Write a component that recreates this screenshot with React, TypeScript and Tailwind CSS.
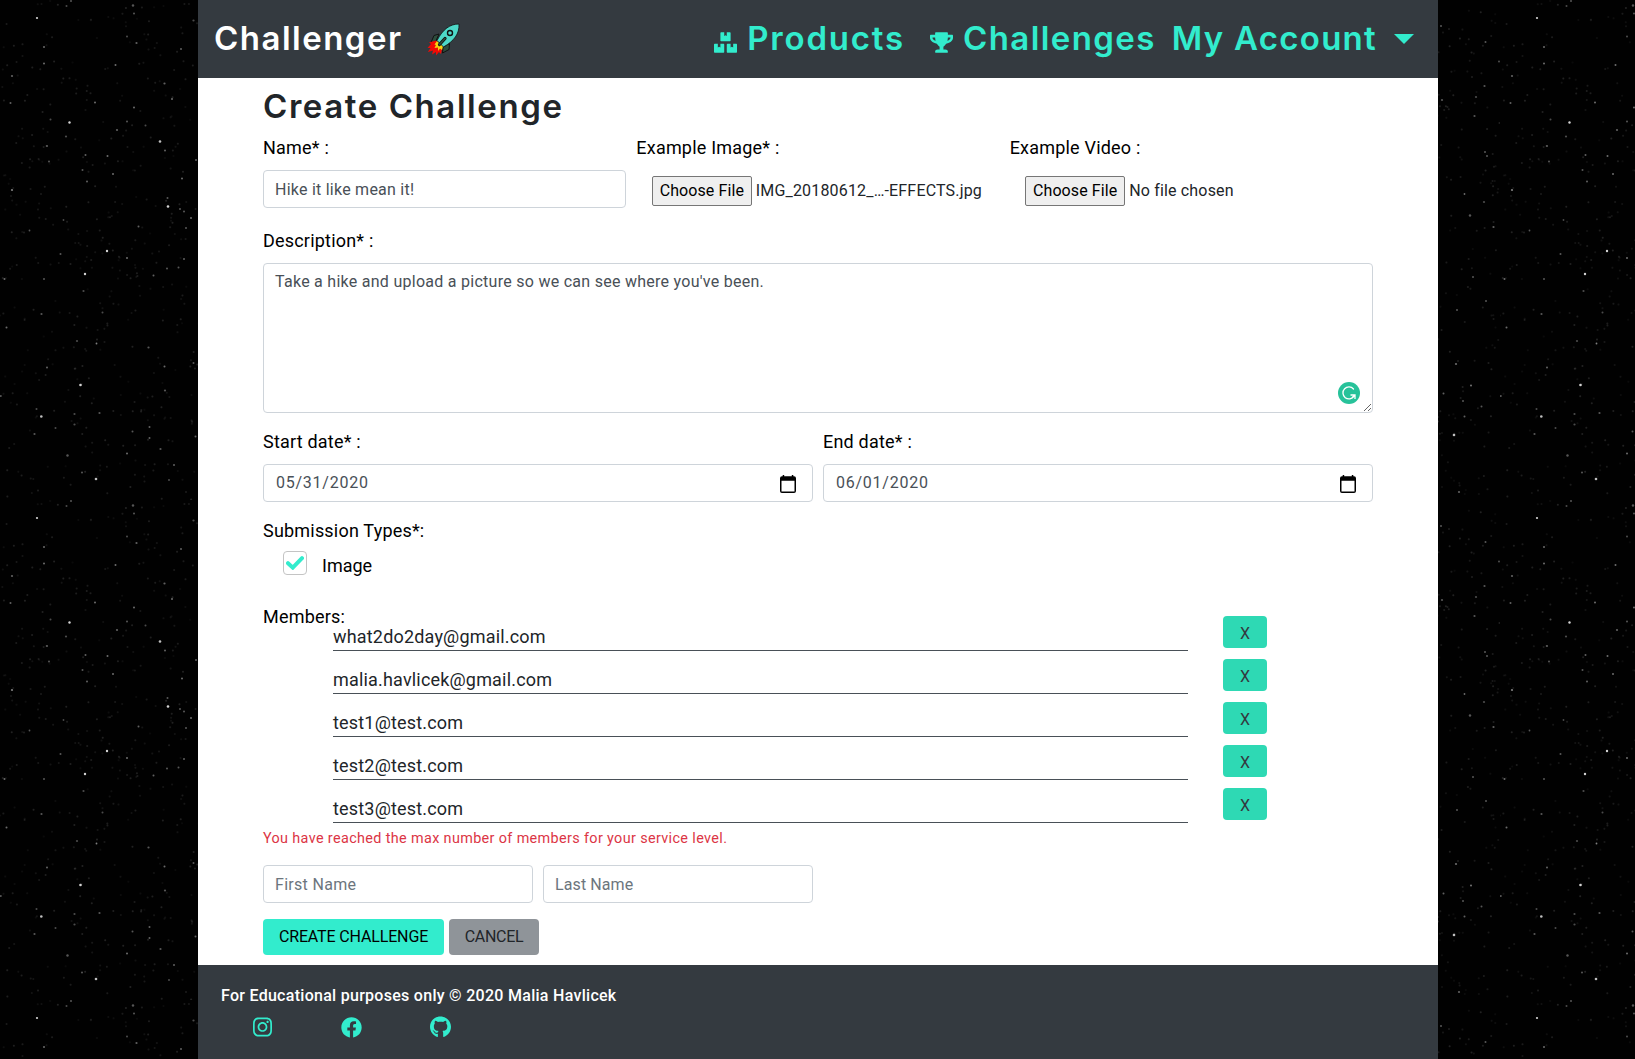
import type { ReactNode } from "react";
import { FaBoxes, FaFacebook, FaGithub, FaInstagram, FaTrophy } from "react-icons/fa";

/* Star positions inside one 500px tile: x, y, radius, opacity */
const stars: [number, number, number, number][] = [
  [37, 18, 1.1, 1], [44, 47, 0.8, 0.5], [44, 63.5, 0.8, 0.5], [69.5, 122.5, 1.2, 1], [50.5, 119.5, 0.8, 0.35],
  [66.5, 6, 0.8, 0.35], [71, 1, 0.8, 0.4], [133, 5.5, 1, 0.4], [134, 13.5, 0.8, 0.4], [136.5, 43, 0.9, 0.45],
  [127, 36.5, 0.8, 0.35], [115.5, 65, 0.8, 0.5], [181, 49, 0.8, 0.45], [193.5, 20.5, 0.9, 0.35], [12, 76, 0.9, 0.45],
  [10.5, 103, 0.8, 0.45], [95, 102.5, 0.8, 0.5], [134, 107.5, 0.8, 0.5], [172, 99, 0.8, 0.5], [164.5, 83.5, 0.9, 0.45],
  [127, 121.5, 0.8, 0.4], [117, 130, 0.9, 0.45], [145.5, 125.5, 0.8, 0.35], [160, 141.5, 1.3, 0.9], [165, 150.5, 0.8, 0.45],
  [66, 136.5, 0.9, 0.35], [47, 146, 0.7, 0.5], [49, 161.5, 0.8, 0.4], [85.5, 155, 0.8, 0.45], [107.5, 156, 0.8, 0.5],
  [82.5, 170, 0.8, 0.4], [87, 181.5, 0.8, 0.45], [113, 174, 0.8, 0.5], [12, 190, 0.9, 0.6], [182, 178.5, 0.8, 0.5],
  [196, 160, 0.8, 0.45], [168, 206.5, 1.3, 1], [167.5, 198, 0.8, 0.4], [180, 209, 0.8, 0.4], [184, 211.5, 0.8, 0.4],
  [191, 218, 0.8, 0.5], [186, 228, 0.8, 0.4], [63.5, 220, 0.7, 0.35], [29.5, 230.5, 0.7, 0.4], [138.5, 226.5, 0.8, 0.45],
  [107, 251, 1.2, 1], [60.5, 254, 0.8, 0.4], [127, 258, 0.8, 0.5], [85, 274, 1.2, 1], [4.5, 279, 0.8, 0.5],
  [44, 279, 0.8, 0.4], [83.5, 291, 0.9, 0.35], [153.5, 275.5, 0.8, 0.45], [167, 268.5, 0.8, 0.4], [178.5, 267.5, 0.8, 0.4],
  [184, 259, 0.8, 0.45], [41.5, 314, 0.9, 0.4], [102.5, 312.5, 0.8, 0.35], [6.5, 327.5, 0.8, 0.5], [77, 341, 0.9, 0.35],
  [96.5, 343.5, 0.7, 0.6], [148.5, 347.5, 0.9, 0.4], [164.5, 366.5, 0.8, 0.5], [193.5, 363, 0.8, 0.4], [47, 367.5, 0.7, 0.5],
  [80.5, 385, 1.3, 1], [165, 390.5, 0.9, 0.4], [0.8, 396, 0.8, 0.4], [36.5, 409, 0.8, 0.35], [41.3, 416.5, 1.3, 0.9],
  [55.5, 428, 0.8, 0.35], [34.5, 434, 0.9, 0.4], [74.5, 414, 0.9, 0.35], [99.5, 413, 0.9, 0.4], [74.5, 424.5, 0.9, 0.35],
  [149.5, 427, 0.8, 0.45], [132.5, 431.5, 0.8, 0.4], [149.5, 438, 0.8, 0.45], [195.5, 436.5, 0.8, 0.45], [160.5, 449, 0.9, 0.4],
  [67.5, 455.5, 1, 0.4], [127, 453.5, 0.8, 0.5], [174, 465, 0.8, 0.45], [82, 472.5, 0.8, 0.4], [96, 479, 1.3, 0.9],
  [169, 480, 0.8, 0.35], [441, 26, 0.8, 0.4], [485.5, 42, 0.8, 0.4], [499, 61.5, 0.7, 0.4], [484.5, 86, 0.9, 0.4],
  [476, 97, 0.9, 0.35], [442, 100, 0.9, 0.4], [474.5, 116, 0.9, 0.4], [485, 152, 0.8, 0.4], [487, 156, 0.8, 0.4],
  [464.5, 194, 0.7, 0.5], [484, 202, 0.9, 0.35], [470, 215.5, 1, 0.4], [493.5, 227, 0.9, 0.45], [473, 277, 0.8, 0.4],
  [486, 301, 0.8, 0.4], [457, 310, 0.8, 0.4], [456, 364, 0.9, 0.5], [471, 385.5, 0.7, 0.6], [443.5, 393.5, 0.8, 0.45],
  [463, 401, 0.8, 0.4], [481.5, 406.5, 0.8, 0.4], [464.5, 416.5, 0.8, 0.45], [454, 435, 1.3, 0.9], [459, 492, 0.9, 0.45],
];

/* Faint background dust, spread over the tile by a small seeded generator */
const dust = (() => {
  let seed = 20;
  const next = () => (seed = (seed * 16807) % 2147483647) / 2147483647;
  return Array.from({ length: 1100 }, () => ({ x: next() * 500, y: next() * 500, o: 0.05 + next() * 0.13 }));
})();

function Starfield() {
  return (
    <svg className="absolute inset-0 h-full w-full" aria-hidden="true">
      <defs>
        <pattern id="stars" width="500" height="500" patternUnits="userSpaceOnUse">
          <rect width="500" height="500" fill="#010101" />
          {dust.map((d, i) => (
            <circle key={i} cx={d.x} cy={d.y} r="1" fill="#b8b8b8" opacity={d.o} />
          ))}
          {stars.map(([x, y, r, o], i) => (
            <circle key={i} cx={x} cy={y} r={o < 0.8 ? r + 0.2 : r} fill="#d4d4d4" opacity={o} />
          ))}
        </pattern>
      </defs>
      <rect width="100%" height="100%" fill="url(#stars)" />
    </svg>
  );
}

function Rocket() {
  return (
    <svg viewBox="0 0 33 33" className="ml-6 h-[33px] w-[33px]" aria-hidden="true">
      <path d="M12 11 7 12.5 4 19.5 8 20zM22.500 20.500 22 26.500 15.500 30 16 24z" fill="#2d4d3d" stroke="#111" strokeWidth="1" />
      <path d="M9 17.500 2 19.500 4 21 .5 25 3.500 25 .8 29 6 27.500 5 31.500 9 29 9 32.500 12 29 14 31 15.500 23.500z" fill="#f00a05" />
      <path d="M10 18 7.500 21.500 9 22 7.500 25 11 24.500 11 28 13 25.500 15 27 16 23z" fill="#f6d50f" />
      <path d="M32 1C23 1 16 6 10 17.500L16.500 24C27 18 32.500 11 32 1Z" fill="#4dd8c8" stroke="#111" strokeWidth="0.800" />
      <circle cx="23" cy="10" r="2.500" fill="#4dd8c8" stroke="#111" strokeWidth="1.400" />
      <path d="M18 15.500 12.500 21.500" stroke="#111" strokeWidth="3.200" strokeLinecap="round" />
      <path d="M18 15.500 12.500 21.500" stroke="#2d4d3d" strokeWidth="1.600" strokeLinecap="round" />
    </svg>
  );
}

function CalendarIcon() {
  return (
    <svg viewBox="0 0 16 18" className="mt-px h-[18px] w-4" aria-hidden="true">
      <path
        fillRule="evenodd"
        d="M2.700 0h1.500v1.200h7.600V0h1.500v1.200h.7a2 2 0 0 1 2 2V16a2 2 0 0 1-2 2H2a2 2 0 0 1-2-2V3.200a2 2 0 0 1 2-2h.7zM1.500 5.800v10.700h13V5.800z"
      />
    </svg>
  );
}

const box = "h-[38px] w-full rounded border border-[#ced4da] bg-white px-[11px] text-base leading-6 text-[#495057]";

function Label({ children }: { children: ReactNode }) {
  return <div className="h-[27px] text-lg leading-[27px] tracking-[0.2px] text-black">{children}</div>;
}

function FileField({ label, file }: { label: string; file: string }) {
  return (
    <div className="flex-1">
      <Label>{label}</Label>
      <div className="mt-[15px] ml-[15.5px] flex items-center gap-1">
        <button className="h-[30px] w-[100px] rounded-[2px] border border-[#767676] bg-[#efefef] text-base leading-none tracking-[0.1px] text-black">
          Choose File
        </button>
        <span className="text-base leading-6 tracking-[0.17px] whitespace-nowrap text-[#212529]">{file}</span>
      </div>
    </div>
  );
}

function DateField({ label, value }: { label: string; value: string }) {
  return (
    <div className="flex-1">
      <Label>{label}</Label>
      <div className="mt-[9px] flex h-[38px] items-center justify-between rounded border border-[#ced4da] pr-4 pl-3 text-base">
        <span className="tracking-[0.76px] text-[#495057]">{value}</span>
        <CalendarIcon />
      </div>
    </div>
  );
}

const members = [
  "what2do2day@gmail.com",
  "malia.havlicek@gmail.com",
  "test1@test.com",
  "test2@test.com",
  "test3@test.com",
];

export default function App() {
  return (
    <div className="relative h-[1059px] w-full overflow-hidden bg-black font-['Roboto',sans-serif]">
      <Starfield />
      <div className="relative ml-[198px] flex h-full w-[1240px] flex-col bg-white">
        <header className="flex h-[78px] shrink-0 items-center bg-[#343a40] pl-4 font-['Inter',sans-serif] text-[33px] font-semibold">
          <span className="tracking-[1.48px] text-white">Challenger</span>
          <Rocket />
          <nav className="ml-auto flex items-center text-[#32eccd]">
            <FaBoxes className="mt-[7px] mr-[10px] h-[21px] w-[23px]" />
            <span className="tracking-[1.82px]">Products</span>
            <FaTrophy className="mt-[7px] mr-[10px] ml-[25px] h-[21px] w-[23px]" />
            <span className="tracking-[1.4px]">Challenges</span>
            <span className="ml-4 tracking-[1.27px]">My Account</span>
            <svg viewBox="0 0 20 10" className="mr-6 ml-[17px] h-[10px] w-5" fill="currentColor" aria-hidden="true">
              <path d="M0 0h20L10 10z" />
            </svg>
          </nav>
        </header>

        <main className="flex flex-1 flex-col px-[65px]">
          <h1 className="mt-2 h-10 font-['Inter',sans-serif] text-[33px] leading-10 font-semibold tracking-[1.58px] text-[#212529]">
            Create Challenge
          </h1>

          <div className="mt-2 flex h-[74px] gap-[10px]">
            <div className="flex-1">
              <Label>Name* :</Label>
              <input className={`${box} mt-[9px] tracking-[0.24px]`} defaultValue="Hike it like mean it!" />
            </div>
            <FileField label="Example Image* :" file="IMG_20180612_…-EFFECTS.jpg" />
            <FileField label="Example Video :" file="No file chosen" />
          </div>

          <div className="mt-[19px]">
            <Label>Description* :</Label>
            <div className="relative mt-[9px] h-[150px]">
              <textarea
                className="block h-[150px] w-full rounded border border-[#ced4da] px-[11px] py-1.5 text-base leading-6 tracking-[0.27px] text-[#495057]"
                defaultValue="Take a hike and upload a picture so we can see where you've been."
              />
              <svg viewBox="0 0 22 22" className="absolute right-[13px] bottom-[9px] h-[22px] w-[22px]" aria-hidden="true">
                <circle cx="11" cy="11" r="11" fill="#27c29a" />
                <path d="M15.500 7A6 6 0 1 0 16 14.200" fill="none" stroke="#fff" strokeWidth="1.300" strokeLinecap="round" />
                <path d="M12.500 13H17V17M17 13 14.500 15.200" fill="none" stroke="#fff" strokeWidth="1.300" />
              </svg>
            </div>
          </div>

          <div className="mt-[15px] flex gap-[10px]">
            <DateField label="Start date* :" value="05/31/2020" />
            <DateField label="End date* :" value="06/01/2020" />
          </div>

          <div className="mt-[15px]">
            <Label>Submission Types*:</Label>
            <div className="mt-[7px] ml-5 flex h-6">
              <span className="flex h-6 w-6 items-center justify-center rounded border border-[#c4c4c4]">
                <svg viewBox="0 0 18 14" className="h-[14px] w-[18px]" aria-hidden="true">
                  <path d="M2 7.200 6.800 11.600 16 2.200" fill="none" stroke="#32eccd" strokeWidth="4" strokeLinecap="round" />
                </svg>
              </span>
              <span className="mt-px ml-[15px] text-lg leading-[27px] text-black">Image</span>
            </div>
          </div>

          <div className="mt-7 h-[13px]">
            <Label>Members:</Label>
          </div>
          <ul className="flex flex-col gap-[11px]">
            {members.map((m) => (
              <li key={m} className="flex h-8 pl-[70px]">
                <span className="mt-[7px] h-7 w-[855px] border-b border-[#495057] text-lg leading-[27px] tracking-[0.18px] text-[#212529]">
                  {m}
                </span>
                <button className="ml-[35px] h-8 w-11 rounded bg-[#2ed9b4] pt-[3px] text-base leading-none text-[#343a40]">X</button>
              </li>
            ))}
          </ul>

          <p className="mt-2 h-[21px] text-[14.4px] leading-[22px] tracking-[0.36px] text-[#dc3545]">
            You have reached the max number of members for your service level.
          </p>

          <div className="mt-4 flex w-[550px] gap-[10px]">
            <input className={`${box} placeholder:text-[#6c757d] tracking-[0.3px]`} placeholder="First Name" />
            <input className={`${box} placeholder:text-[#6c757d] tracking-[0.1px]`} placeholder="Last Name" />
          </div>

          <div className="mt-4 flex gap-[5px]">
            <button className="h-9 w-[181px] rounded bg-[#32eccd] text-base leading-none tracking-[-0.15px] text-black">
              CREATE CHALLENGE
            </button>
            <button className="h-9 w-[90px] rounded bg-[#8f9499] text-base leading-none tracking-[-0.3px] text-[#212529]">
              CANCEL
            </button>
          </div>
        </main>

        <footer className="h-[94px] shrink-0 bg-[#343a40] pt-[19px] pl-[23px]">
          <p className="text-base leading-6 font-medium tracking-[0.28px] text-white">
            For Educational purposes only © 2020 Malia Havlicek
          </p>
          <div className="mt-2 flex items-center pl-8 text-[#32eccd]">
            <FaInstagram className="h-[22px] w-[19px]" />
            <FaFacebook className="ml-[69px] h-[21px] w-[21px]" />
            <FaGithub className="ml-[68px] h-[22px] w-[21px]" />
          </div>
        </footer>
      </div>
    </div>
  );
}
